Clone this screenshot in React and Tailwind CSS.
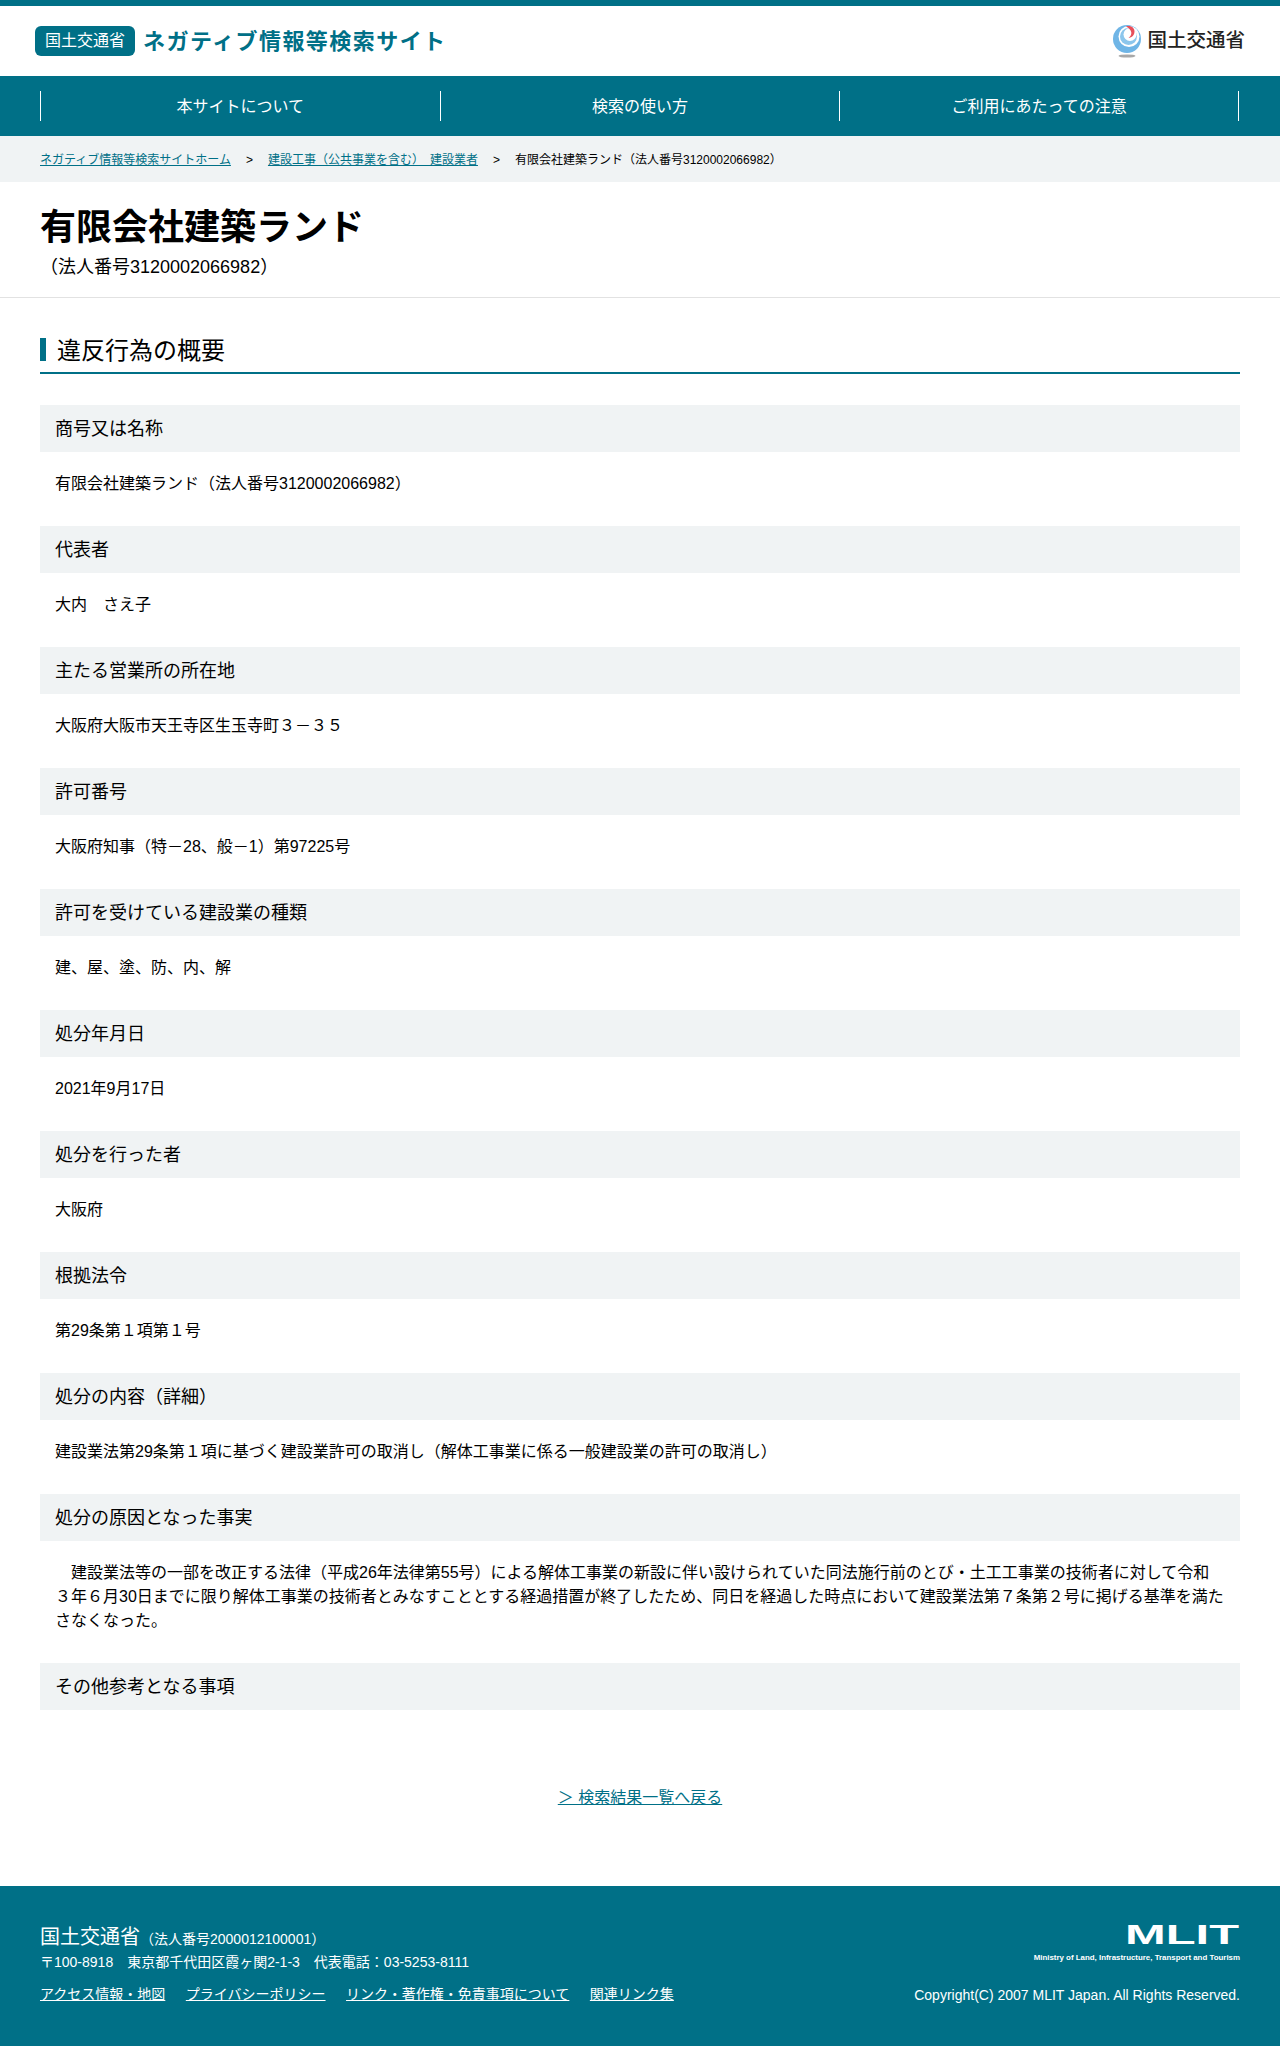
const font = '[font-family:"Liberation_Sans","Noto_Sans_CJK_JP",sans-serif]'

const rows = [
  ['商号又は名称', '有限会社建築ランド（法人番号3120002066982）'],
  ['代表者', '大内　さえ子'],
  ['主たる営業所の所在地', '大阪府大阪市天王寺区生玉寺町３－３５'],
  ['許可番号', '大阪府知事（特－28、般－1）第97225号'],
  ['許可を受けている建設業の種類', '建、屋、塗、防、内、解'],
  ['処分年月日', '2021年9月17日'],
  ['処分を行った者', '大阪府'],
  ['根拠法令', '第29条第１項第１号'],
  ['処分の内容（詳細）', '建設業法第29条第１項に基づく建設業許可の取消し（解体工事業に係る一般建設業の許可の取消し）'],
  ['処分の原因となった事実', '　建設業法等の一部を改正する法律（平成26年法律第55号）による解体工事業の新設に伴い設けられていた同法施行前のとび・土工工事業の技術者に対して令和３年６月30日までに限り解体工事業の技術者とみなすこととする経過措置が終了したため、同日を経過した時点において建設業法第７条第２号に掲げる基準を満たさなくなった。'],
  ['その他参考となる事項', ''],
]

const MlitMark = () => (
  <svg width="30" height="33" viewBox="0 0 30 33" className="shrink-0">
    <circle cx="15" cy="14" r="14" fill="#6fb5e6" />
    <circle cx="17" cy="11.5" r="10.5" fill="#ffffff" />
    <circle cx="16.5" cy="11.5" r="8.5" fill="#8cc6ec" />
    <circle cx="18" cy="9.5" r="6.5" fill="#ffffff" />
    <path d="M14 1.5c5-1.500 8.500 1.500 8.500 5 0 3.500-2.500 6-6 6.500 2-1.500 3-3.500 2.800-5.500C19 5 17 3 14 1.500z" fill="#e8505b" />
    <ellipse cx="15" cy="31" rx="8.500" ry="1.600" fill="#a8a8a8" />
  </svg>
)

const Row = ({ title, value }) => (
  <section>
    <h3 className="bg-[#f0f3f4] h-[47px] flex items-center px-[15px] text-lg font-normal text-black">{title}</h3>
    {value && <p className="px-[15px] pt-[20px] pb-[30px] text-base leading-6 text-black">{value}</p>}
  </section>
)

export default function App() {
  return (
    <div className={`${font} bg-white min-h-[2046px] flex flex-col`}>
      <header className="border-t-[6px] border-[#007087] h-[76px] px-[35px] flex items-center justify-between">
        <div className="flex items-center gap-[8px]">
          <span className="bg-[#007087] text-white text-base rounded-md w-[100px] h-[30px] flex items-center justify-center">国土交通省</span>
          <span className="text-[#007087] text-[22px] font-bold tracking-[1.45px]">ネガティブ情報等検索サイト</span>
        </div>
        <div className="flex items-center gap-[5px]">
          <MlitMark />
          <span className="text-[19.5px] font-medium text-[#222]">国土交通省</span>
        </div>
      </header>

      <nav className="bg-[#007087] h-[60px] px-10 flex items-center">
        <ul className="flex">
          {['本サイトについて', '検索の使い方'].map((item) => (
            <li key={item} className="w-[399.67px] h-[30px] pt-px border-l border-white flex items-center justify-center text-white text-base">{item}</li>
          ))}
          <li className="w-[399.67px] h-[30px] pt-px border-x border-white flex items-center justify-center text-white text-base">ご利用にあたっての注意</li>
        </ul>
      </nav>

      <div className="bg-[#f0f3f4] h-[46px] px-10 pt-px flex items-center text-xs text-black">
        <a href="#" className="text-[#007087] underline">ネガティブ情報等検索サイトホーム</a>
        <span className="mx-[15px]">&gt;</span>
        <a href="#" className="text-[#007087] underline">建設工事（公共事業を含む）　建設業者</a>
        <span className="mx-[15px]">&gt;</span>
        <span>有限会社建築ランド（法人番号3120002066982）</span>
      </div>

      <div className="h-[116px] px-10 pt-6 border-b border-[#e2e2e2]">
        <h1 className="text-4xl leading-[44px] font-bold text-black">有限会社建築ランド</h1>
        <p className="mt-1 text-lg leading-[26px] text-black">（法人番号3120002066982）</p>
      </div>

      <main className="px-10 flex-1">
        <h2 className="mt-10 mb-[31px] pb-[11px] border-b-2 border-[#007087] text-2xl leading-5 font-normal text-black">
          <span className="block border-l-[6px] border-[#007087] pl-[11px] pt-[3px]">違反行為の概要</span>
        </h2>
        {rows.map(([title, value]) => <Row key={title} title={title} value={value} />)}
        <p className="mt-[76px] text-center text-base">
          <a href="#" className="text-[#007087] underline">＞ 検索結果一覧へ戻る</a>
        </p>
      </main>

      <footer className="bg-[#007087] h-[160px] px-10 pt-[37px] flex justify-between text-white">
        <div>
          <p className="text-xl leading-7">国土交通省<span className="text-sm">（法人番号2000012100001）</span></p>
          <p className="text-sm leading-[22px]">〒100-8918　東京都千代田区霞ヶ関2-1-3　代表電話：03-5253-8111</p>
          <ul className="flex gap-[20.5px] mt-[9px] text-sm leading-6">
            {['アクセス情報・地図', 'プライバシーポリシー', 'リンク・著作権・免責事項について', '関連リンク集'].map((l) => (
              <li key={l}><a href="#" className="underline">{l}</a></li>
            ))}
          </ul>
        </div>
        <div className="flex flex-col items-end">
          <svg width="116" height="22" viewBox="0 0 116 22">
            <text x="1" y="20.5" fontSize="28" fontWeight="700" fill="#fff" textLength="114" lengthAdjust="spacingAndGlyphs">MLIT</text>
          </svg>
          <p className="text-[7.9px] leading-3 font-bold mt-[7px]">Ministry of Land, Infrastructure, Transport and Tourism</p>
          <p className="text-sm leading-5 mt-[21px]">Copyright(C) 2007 MLIT Japan. All Rights Reserved.</p>
        </div>
      </footer>
    </div>
  )
}
